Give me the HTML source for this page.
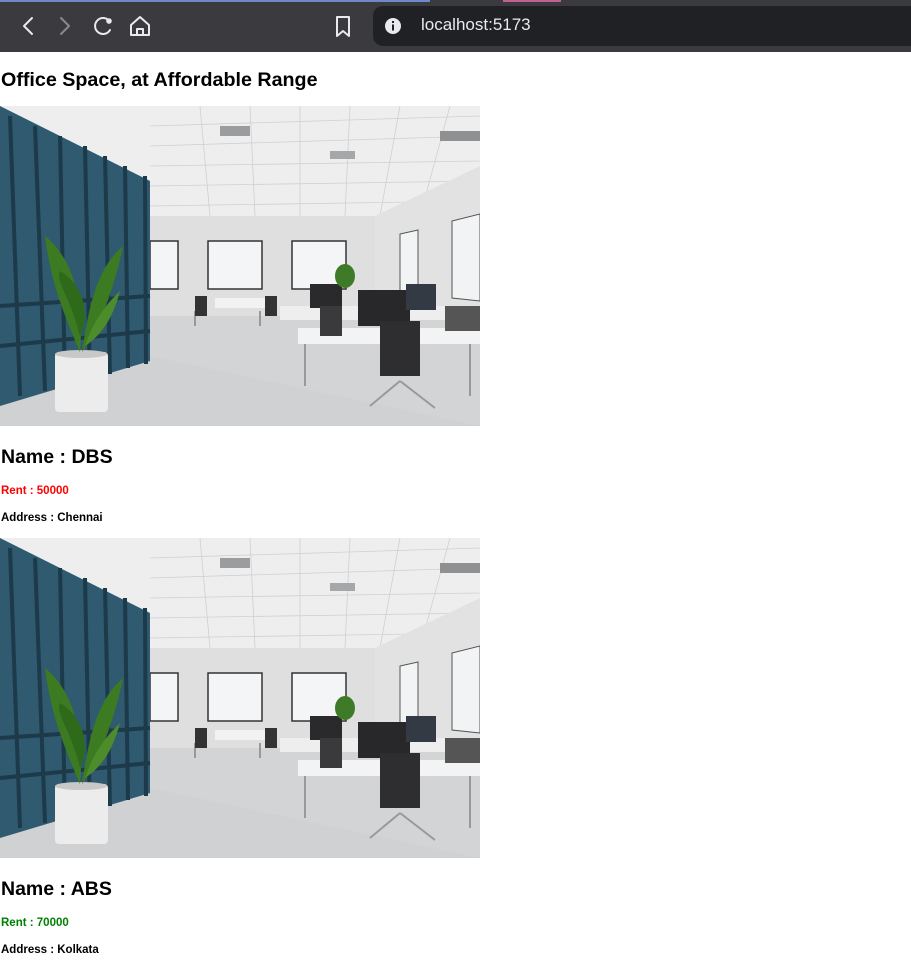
<!DOCTYPE html>
<html><head><meta charset="utf-8"><style>
*{margin:0;padding:0;box-sizing:border-box}
body{width:911px;height:966px;overflow:hidden;background:#fff;font-family:"Liberation Sans",sans-serif;position:relative}
.bar{position:absolute;left:0;top:0;width:911px;height:52px;background:#3b3b3f}
.bar .tl{position:absolute;top:0;left:0;height:2px;width:430px;background:#6c8ac7}
.bar .tp{position:absolute;top:0;left:503px;height:2px;width:58px;background:#c06090}
.addr{position:absolute;left:373px;top:6px;width:560px;height:40px;background:#202124;border-radius:10px}
.addr span{position:absolute;left:48px;top:9px;color:#e8eaed;font-size:17px}
.t{position:absolute;left:1px;font-weight:bold;color:#000}
.h1{top:69px;font-size:19.7px}
.h2{font-size:19.5px}
.s{font-size:11.5px}
svg.img{position:absolute;left:0;width:480px;height:320px}
</style></head><body>
<div class="bar"><div class="tl"></div><div class="tp"></div>
<svg width="360" height="52" style="position:absolute;left:0;top:0" fill="none" stroke="#e8eaed" stroke-width="2" stroke-linecap="round" stroke-linejoin="round">
<path d="M32 18 L24 26 L32 34"/>
<path d="M61 18 L69 26 L61 34" stroke="#8a8a8e"/>
<path d="M110 22 A8 8 0 1 0 110 30"/><circle cx="109" cy="21" r="1.8" fill="#e8eaed"/>
<path d="M131 25 L140 17 L149 25 V35 H131 Z"/><path d="M137 35 V29 H143 V35"/>
<path d="M337 17 H349 V36 L343 31 L337 36 Z"/>
</svg>
<div class="addr"><svg width="18" height="18" style="position:absolute;left:11px;top:11px"><circle cx="9" cy="9" r="8" fill="#e8eaed"/><rect x="8" y="7.5" width="2" height="6" fill="#202124"/><rect x="8" y="4" width="2" height="2" fill="#202124"/></svg><span>localhost:5173</span></div>
</div>

<svg width="0" height="0" style="position:absolute"><defs>
<g id="scene">
<rect width="480" height="320" fill="#e4e5e7"/>
<rect y="0" width="480" height="110" fill="#eeeeef"/>
<g stroke="#cfd0d2" stroke-width="0.8">
<path d="M150 20 L480 10 M150 40 L480 30 M150 60 L480 55 M150 80 L480 75 M150 100 L480 95"/>
<path d="M200 0 L210 110 M250 0 L255 110 M300 0 L300 110 M350 0 L345 110 M400 0 L380 110 M450 0 L420 110"/>
</g>
<rect x="220" y="20" width="30" height="10" fill="#9a9c9e"/><rect x="330" y="45" width="25" height="8" fill="#a5a7a9"/><rect x="440" y="25" width="40" height="10" fill="#8e9092"/>
<rect x="150" y="110" width="225" height="100" fill="#dfdfe0"/>
<polygon points="375,110 480,60 480,320 375,210" fill="#e2e2e3"/>
<rect x="0" y="210" width="480" height="110" fill="#d3d4d6"/>
<polygon points="0,290 150,250 480,320 0,320" fill="#d0d1d3"/>
<rect x="150" y="135" width="28" height="48" fill="#f4f5f6" stroke="#333" stroke-width="1.5"/>
<rect x="208" y="135" width="54" height="48" fill="#f4f5f6" stroke="#333" stroke-width="1.5"/>
<rect x="292" y="135" width="54" height="48" fill="#f4f5f6" stroke="#333" stroke-width="1.5"/>
<polygon points="400,128 418,124 418,190 400,188" fill="#f2f3f4" stroke="#555"/>
<polygon points="452,115 480,108 480,195 452,192" fill="#f2f3f4" stroke="#555"/>
<polygon points="0,0 150,75 150,255 0,300" fill="#2f5a6f"/>
<g stroke="#1c3a4a" stroke-width="4">
<path d="M10 10 L20 290 M35 20 L45 285 M60 30 L65 280 M85 40 L90 275 M105 50 L110 268 M125 60 L128 262 M145 70 L146 258"/>
<path d="M0 200 L150 190 M0 240 L150 225"/>
</g>
<rect x="215" y="192" width="50" height="10" fill="#f2f2f2"/>
<rect x="280" y="200" width="200" height="14" fill="#eeeeef"/>
<rect x="298" y="222" width="182" height="16" fill="#f3f3f4"/>
<rect x="310" y="178" width="32" height="24" fill="#2a2a2c"/>
<rect x="358" y="184" width="52" height="36" fill="#28282a"/>
<rect x="406" y="178" width="30" height="26" fill="#333a44"/>
<path d="M380 215 h40 v55 h-40 z" fill="#2e2e30"/>
<path d="M320 200 h22 v30 h-22 z" fill="#3a3a3c"/>
<path d="M445 200 h35 v25 h-35z" fill="#555"/>
<g stroke="#999" stroke-width="2"><path d="M305 238 V280 M470 238 V290 M400 275 L370 300 M400 275 L435 302 M195 205 V220 M260 205 V220"/></g>
<path d="M195 190 h12 v20 h-12z M265 190 h12 v20 h-12z" fill="#333"/>
<g fill="#3f7a28"><ellipse cx="345" cy="170" rx="10" ry="12"/></g>
<rect x="55" y="246" width="53" height="60" rx="4" fill="#ececec"/>
<ellipse cx="81" cy="248" rx="26" ry="4" fill="#c8c8c8"/>
<g fill="#3d7b22"><path d="M80 246 C60 200 50 170 45 130 C70 150 85 190 80 246Z"/><path d="M82 246 C90 190 100 160 123 140 C115 180 100 220 82 246Z"/><path d="M80 230 C70 190 55 175 60 165 C85 180 90 210 80 230Z" fill="#2f6a1a"/><path d="M85 240 C95 210 110 195 120 185 C112 215 100 230 85 240Z" fill="#4e8b2a"/></g>
</g></defs></svg>

<div class="t h1">Office Space, at Affordable Range</div>
<svg class="img" style="top:106px" viewBox="0 0 480 320"><use href="#scene"/></svg>
<div class="t h2" style="top:446px">Name : DBS</div>
<div class="t s" style="top:485px;color:#f00">Rent : 50000</div>
<div class="t s" style="top:512px">Address : Chennai</div>
<svg class="img" style="top:538px" viewBox="0 0 480 320"><use href="#scene"/></svg>
<div class="t h2" style="top:878px">Name : ABS</div>
<div class="t s" style="top:917px;color:#008000">Rent : 70000</div>
<div class="t s" style="top:944px">Address : Kolkata</div>
</body></html>
